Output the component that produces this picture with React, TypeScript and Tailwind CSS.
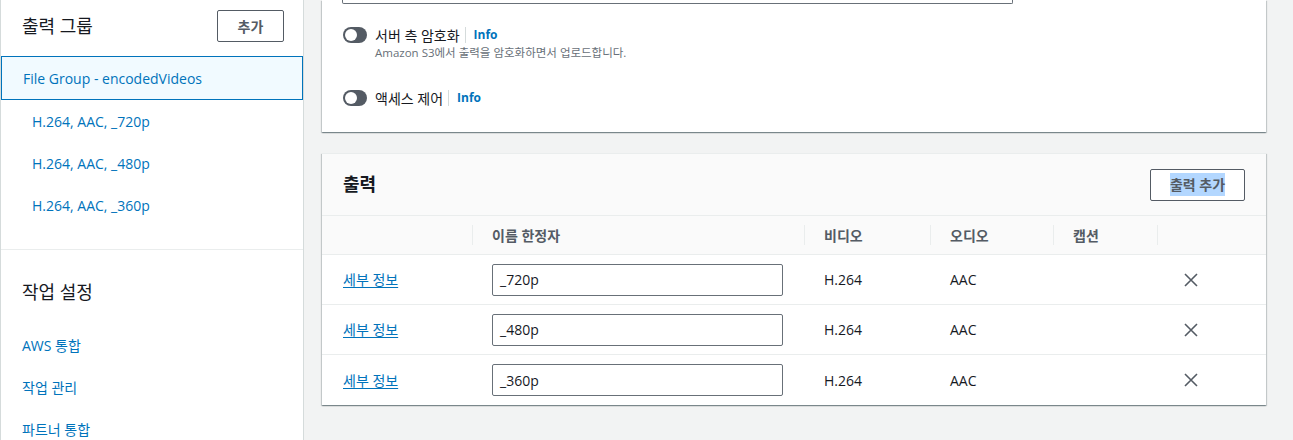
import React from "react";

const FONT = "font-['Open_Sans','Noto_Sans_CJK_KR',sans-serif]";

const GROUP_ITEMS = ["H.264, AAC, _720p", "H.264, AAC, _480p", "H.264, AAC, _360p"];
const JOB_ITEMS = ["AWS 통합", "작업 관리", "파트너 통합"];
const OUTPUTS = ["_720p", "_480p", "_360p"];

const cols = "grid grid-cols-[150px_332px_126px_123px_104px_1fr]";

function Toggle() {
  return (
    <span className="inline-flex h-[16px] w-[24px] items-center rounded-full bg-[#545b64] px-[2px]">
      <span className="h-[12px] w-[12px] rounded-full bg-white" />
    </span>
  );
}

function HeadCell({ label, divider = true }: { label?: string; divider?: boolean }) {
  return (
    <div className="flex items-center">
      {divider && <span className="h-[20px] w-px bg-[#eaeded]" />}
      {label && <span className="pl-[19px] text-[14px] font-bold text-[#545b64]">{label}</span>}
    </div>
  );
}

function CloseIcon() {
  return (
    <svg width="16" height="16" viewBox="0 0 16 16" fill="none" stroke="#545b64" strokeWidth="1.6">
      <path d="M2 2l12 12M14 2L2 14" />
    </svg>
  );
}

export default function App() {
  return (
    <div className={`${FONT} flex h-[440px] w-[1293px] overflow-hidden bg-[#f2f3f3] text-[#16191f]`}>
      {/* Sidebar */}
      <aside className="w-[304px] shrink-0 overflow-hidden border-l border-r border-[#d5dbdb] bg-white">
        <div className="flex h-[56px] items-start justify-between pl-[21px] pr-[19px] pt-[10px]">
          <h2 className="flex h-[32px] items-center text-[18px] leading-none">출력 그룹</h2>
          <button className="h-[32px] w-[67px] rounded-[2px] border border-[#545b64] text-[14px] font-bold text-[#545b64]">
            추가
          </button>
        </div>
        <div className="flex h-[44px] items-center border border-[#0073bb] bg-[#f1faff] pl-[21px] text-[14px] text-[#0073bb]">
          File Group - encodedVideos
        </div>
        {GROUP_ITEMS.map((item) => (
          <div key={item} className="flex h-[42px] items-center pl-[31px] text-[14px] text-[#0073bb]">
            {item}
          </div>
        ))}
        <div className="mt-[23px] border-t border-[#eaeded]" />
        <h2 className="mt-[21px] flex h-[42px] items-center pl-[21px] text-[18px]">작업 설정</h2>
        <div className="mt-[11px]">
          {JOB_ITEMS.map((item) => (
            <div key={item} className="flex h-[42px] items-center pl-[21px] text-[14px] text-[#0073bb]">
              {item}
            </div>
          ))}
        </div>
      </aside>

      {/* Main */}
      <main className="flex flex-1 flex-col pl-[18px] pr-[27px]">
        <section className="shrink-0 bg-white pb-[24px] shadow-[0_1px_1px_0_rgba(0,28,36,0.3),1px_1px_1px_0_rgba(0,28,36,0.15),-1px_1px_1px_0_rgba(0,28,36,0.15)]">
          <div className="ml-[20px] h-[4px] w-[671px] rounded-b-[2px] border border-t-0 border-[#687078]" />
          <div className="mt-[21px] flex h-[20px] items-center pl-[21px]">
            <Toggle />
            <span className="ml-[8px] text-[14px]">서버 측 암호화</span>
            <span className="ml-[5px] h-[16px] w-px bg-[#d5dbdb]" />
            <span className="ml-[8px] text-[12px] font-bold text-[#0073bb]">Info</span>
          </div>
          <p className="pl-[53px] text-[11.5px] leading-[16px] text-[#687078]">
            Amazon S3에서 출력을 암호화하면서 업로드합니다.
          </p>
          <div className="mt-[27px] flex h-[20px] items-center pl-[21px]">
            <Toggle />
            <span className="ml-[8px] text-[14px]">액세스 제어</span>
            <span className="ml-[5px] h-[16px] w-px bg-[#d5dbdb]" />
            <span className="ml-[8px] text-[12px] font-bold text-[#0073bb]">Info</span>
          </div>
        </section>

        <section className="mt-[21px] shrink-0 border-t border-[#eaeded] bg-white shadow-[0_1px_1px_0_rgba(0,28,36,0.3),1px_1px_1px_0_rgba(0,28,36,0.15),-1px_1px_1px_0_rgba(0,28,36,0.15)]">
          <div className="flex h-[62px] items-center justify-between border-b border-[#eaeded] bg-[#fafafa] pl-[21px] pr-[21px]">
            <h2 className="text-[18px] font-bold">출력</h2>
            <button className="h-[32px] w-[95px] rounded-[2px] border border-[#545b64] bg-white text-[14px] font-bold text-[#545b64]">
              <span className="bg-[#b3d7ff] py-[2px]">출력 추가</span>
            </button>
          </div>
          <div className={`${cols} h-[39px] border-b border-[#eaeded] bg-[#fafafa]`}>
            <HeadCell divider={false} />
            <HeadCell label="이름 한정자" />
            <HeadCell label="비디오" />
            <HeadCell label="오디오" />
            <HeadCell label="캡션" />
            <HeadCell />
          </div>
          {OUTPUTS.map((name, i) => (
            <div
              key={name}
              className={`${cols} h-[50px] items-center text-[14px] ${i < OUTPUTS.length - 1 ? "border-b border-[#eaeded]" : ""}`}
            >
              <a className="pl-[21px] text-[#0073bb] underline underline-offset-2">세부 정보</a>
              <div className="pl-[20px]">
                <div className="flex h-[32px] w-[291px] items-center rounded-[2px] border border-[#687078] px-[7px]">
                  {name}
                </div>
              </div>
              <span className="pl-[20px]">H.264</span>
              <span className="pl-[20px]">AAC</span>
              <span />
              <span className="flex pl-[26px]">
                <CloseIcon />
              </span>
            </div>
          ))}
        </section>
      </main>
    </div>
  );
}
